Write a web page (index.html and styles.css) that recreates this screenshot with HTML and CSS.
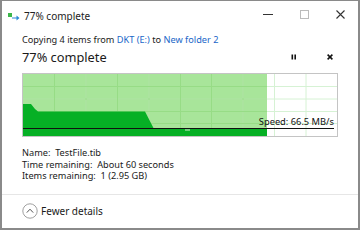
FILE: index.html
```html
<!DOCTYPE html>
<html lang="en">
<head>
<meta charset="utf-8">
<title>77% complete</title>
<link rel="stylesheet" href="styles.css">
</head>
<body>
<div class="window">
  <div class="titlebar">
    <svg class="app-icon" width="12" height="8" viewBox="0 0 12 8">
      <rect x="0" y="0" width="4" height="4" fill="#3cb64a"/>
      <path d="M4 4.5 H8.5 V2.5 L11.5 5 L8.5 7.5 V5.5 H4 Z" fill="#2b8ad8"/>
    </svg>
    <span class="title">77% complete</span>
    <div class="controls">
      <svg class="ctl" width="36" height="10" viewBox="0 0 36 10"><path d="M0 4.5 H10" stroke="#333" stroke-width="1"/></svg>
      <svg class="ctl" width="36" height="10" viewBox="0 0 36 10"><rect x="0.5" y="0.5" width="8" height="8" fill="none" stroke="#bbb" stroke-width="1"/></svg>
      <svg class="ctl" width="22" height="10" viewBox="0 0 22 10"><path d="M0.5 0.5 L8.5 8.5 M8.5 0.5 L0.5 8.5" stroke="#333" stroke-width="1.1"/></svg>
    </div>
  </div>
  <div class="content">
    <div class="copying">Copying 4 items from <span class="link">DKT (E:)</span> to <span class="link">New folder 2</span></div>
    <div class="status-row">
      <div class="big">77% complete</div>
      <div class="actions">
        <svg width="6" height="6" viewBox="0 0 6 6"><rect x="0.5" y="0.5" width="1.6" height="5" fill="#111"/><rect x="3.4" y="0.5" width="1.6" height="5" fill="#111"/></svg>
        <svg width="6" height="6" viewBox="0 0 6 6"><path d="M0.6 0.6 L5.4 5.4 M5.4 0.6 L0.6 5.4" stroke="#111" stroke-width="1.5"/></svg>
      </div>
    </div>
    <div class="graph">
      <svg width="314" height="62" viewBox="0 0 314 62">
        <rect x="0" y="0" width="244" height="62" fill="#a8e59a"/>
        <g stroke="#d6f2d4" stroke-width="1">
          <path d="M31.5 0V62M63 0V62M94.5 0V62M126 0V62M157.5 0V62M188.5 0V62M220 0V62M251.5 0V62M283 0V62"/>
          <path d="M0 12.5H314M0 25H314M0 37.5H314M0 49.5H314"/>
        </g>
        <g stroke="#97dc86" stroke-width="1">
          <path d="M31.5 0V62M63 0V62M94.5 0V62M126 0V62M157.5 0V62M188.5 0V62M220 0V62"/>
          <path d="M0 12.5H244M0 25H244M0 37.5H244M0 49.5H244"/>
        </g>
        <polygon points="0,30 8,30 12,35 15,37.5 122,37.5 131,55 244,55 244,62 0,62" fill="#06b025"/>
        <rect x="162" y="55.5" width="5" height="1" fill="#d9efd6"/>
        <path d="M0 54.5H311" stroke="#111" stroke-width="1"/>
      </svg>
      <span class="speed">Speed: 66.5 MB/s</span>
    </div>
    <div class="details">
      <div class="line">Name:  TestFile.tib</div>
      <div class="line">Time remaining:  About 60 seconds</div>
      <div class="line">Items remaining:  1 (2.95 GB)</div>
    </div>
  </div>
  <div class="footer">
    <svg class="chev" width="16" height="16" viewBox="0 0 16 16">
      <circle cx="8" cy="8" r="7.2" fill="none" stroke="#a0a0a0" stroke-width="1"/>
      <path d="M4.8 9.6 L8 6.2 L11.2 9.6" fill="none" stroke="#555" stroke-width="1"/>
    </svg>
    <span>Fewer details</span>
  </div>
</div>
</body>
</html>
```
FILE: styles.css
```css
* { box-sizing: border-box; }
html, body { margin: 0; padding: 0; background: #fff; }
body { font-family: "Noto Sans", "Open Sans", sans-serif; color: #1a1a1a; }

.window {
  width: 360px;
  height: 230px;
  border: 2px solid #8a8a8a;
  border-top-width: 1px;
  background: #fff;
  display: flex;
  flex-direction: column;
  overflow: hidden;
}

.titlebar {
  flex-shrink: 0;
  height: 29px;
  display: flex;
  align-items: center;
  padding-left: 6px;
}
.app-icon { margin-top: 3px; }
.title {
  font-size: 10px;
  margin-left: 4px;
  color: #222;
}
.controls {
  margin-left: auto;
  display: flex;
  align-items: center;
  margin-top: -2px;
}
.ctl { display: block; }
.controls .ctl:first-child { margin-right: 1px; }

.content {
  flex-shrink: 0;
  padding: 4px 0 0 20px;
}
.copying {
  font-size: 9.2px;
  line-height: 12px;
}
.link { color: #1a66c8; }

.status-row {
  display: flex;
  align-items: center;
  height: 22px;
}
.big {
  font-size: 12.8px;
  line-height: 17px;
}
.actions {
  margin-left: auto;
  display: flex;
  gap: 30px;
  padding-right: 25px;
}
.actions svg { display: block; }

.graph {
  position: relative;
  margin-top: 5px;
  width: 316px;
  height: 64px;
  border: 1px solid #c4c4c4;
}
.graph svg { display: block; }
.speed {
  position: absolute;
  right: 3px;
  top: 42px;
  font-size: 9.3px;
  line-height: 12px;
  color: #111;
}

.details {
  margin-top: 10px;
  font-size: 9.2px;
  line-height: 11.5px;
}
.line { white-space: pre; }

.footer {
  flex-shrink: 0;
  margin-top: auto;
  height: 34px;
  border-top: 1px solid #e6e6e6;
  display: flex;
  align-items: center;
  padding-left: 20px;
  font-size: 10px;
  padding-bottom: 2px;
}
.chev { display: block; margin-right: 3px; }
```
